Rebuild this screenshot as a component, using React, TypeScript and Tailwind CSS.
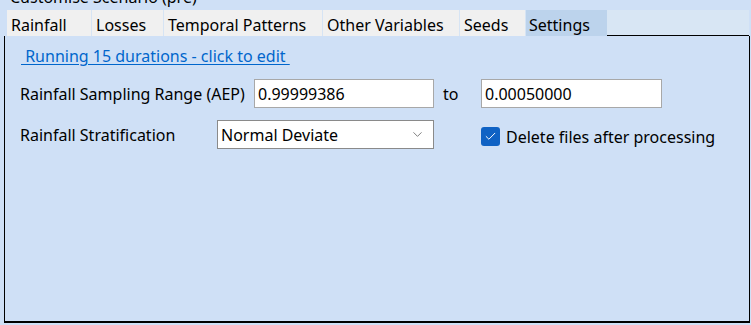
import { Check, ChevronDown } from "lucide-react";

const tabs = [
  { label: "Rainfall", w: 85 },
  { label: "Losses", w: 72 },
  { label: "Temporal Patterns", w: 159 },
  { label: "Other Variables", w: 137 },
  { label: "Seeds", w: 66 },
];

const App = () => {
  return (
    <div
      className="w-[751px] h-[325px] overflow-hidden bg-[#cfe0f6] text-[16px] leading-[20px] text-black flex flex-col"
      style={{ fontFamily: '"Noto Sans", "Open Sans", sans-serif' }}
    >
      <div className="h-[10px] relative overflow-hidden">
        <span className="absolute left-[10px] top-[-13px] leading-[20px] whitespace-nowrap">
          Customise Scenario (pre)
        </span>
      </div>

      {/* tab strip */}
      <div className="flex h-[26px] ml-[7px] w-[742px] bg-[#d8e6f4]">
        {tabs.map((t) => (
          <div
            key={t.label}
            className="h-full bg-[#f0f0f0] border-r border-[#d6e4f4] flex items-center pl-[4px] pt-[3px] leading-none"
            style={{ width: t.w }}
          >
            {t.label}
          </div>
        ))}
        <div className="h-full w-[81px] bg-[#bcd3ec] flex items-center pl-[3px] pt-[3px] leading-none">
          Settings
        </div>
        <div className="flex-1 h-full border-b border-black" />
      </div>

      {/* panel */}
      <div className="flex-1 ml-[4px] mr-[1px] mb-[2px] border-l border-r border-b-2 border-black bg-[#cfe0f6] pl-[15px] pt-[10px]">
        <div className="pl-[1px] h-[20px]">
          <a className="text-[#0066cc] underline underline-offset-2 cursor-pointer whitespace-pre">
            {"\u00a0Running 15 durations - click to edit\u00a0"}
          </a>
        </div>

        <div className="flex items-center mt-[13px] h-[29px]">
          <span className="w-[234px] whitespace-nowrap">Rainfall Sampling Range (AEP)</span>
          <div className="w-[180px] h-[29px] bg-white border border-[#a8a8a8] flex items-center pl-[3px]">
            0.99999386
          </div>
          <span className="ml-[9px] w-[38px]">to</span>
          <div className="w-[181px] h-[29px] bg-white border border-[#a8a8a8] flex items-center pl-[3px]">
            0.00050000
          </div>
        </div>

        <div className="flex items-center mt-[12px] h-[29px]">
          <span className="w-[197px] whitespace-nowrap">Rainfall Stratification</span>
          <div className="w-[217px] h-[29px] bg-white border border-[#8a8a8a] flex items-center justify-between pl-[3px] pr-[8px]">
            <span>Normal Deviate</span>
            <ChevronDown size={15} strokeWidth={1.2} color="#555" />
          </div>
          <div className="ml-[47px] flex items-center gap-[6px] mt-[4px]">
            <div className="w-[19px] h-[19px] rounded-[3px] bg-[#0f62c4] flex items-center justify-center">
              <Check size={13} strokeWidth={1.8} color="white" />
            </div>
            <span className="whitespace-nowrap">Delete files after processing</span>
          </div>
        </div>
      </div>
    </div>
  );
};

export default App;
